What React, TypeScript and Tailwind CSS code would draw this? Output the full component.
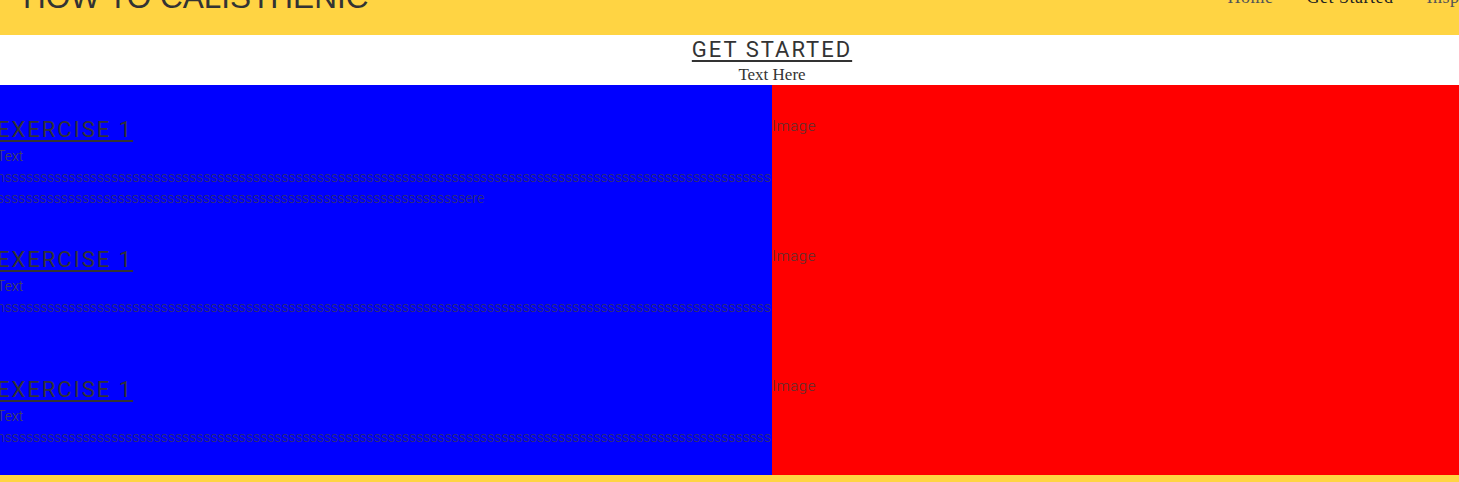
const slab = { fontFamily: '"Liberation Serif", "DejaVu Serif", serif' };
const roboto = { fontFamily: 'Roboto, "Liberation Sans", sans-serif' };

const exercises = [
  { title: "EXERCISE 1", body: "n" + "s".repeat(174) + "ere" },
  { title: "EXERCISE 1", body: "n" + "s".repeat(108) },
  { title: "EXERCISE 1", body: "n" + "s".repeat(108) },
];

function Header() {
  return (
    <header className="flex items-center justify-between bg-[#ffd443] py-5 pl-[23px] pr-[34px]">
      <h1
        className="text-[31.5px] leading-[36px] text-[#333333]"
        style={{ fontFamily: '"Liberation Sans", Arial, sans-serif' }}
      >
        HOW TO CALISTHENIC
      </h1>
      <nav
        className="flex shrink-0 gap-[33px] text-[18px] leading-6 tracking-[0.5px] text-[#555555]"
        style={slab}
      >
        <a>Home</a>
        <a className="text-[#222222]">Get Started</a>
        <a>Inspiration</a>
      </nav>
    </header>
  );
}

function ExerciseRow({ title, body }: { title: string; body: string }) {
  return (
    <div className="grid h-[130px] grid-cols-2">
      <div className="overflow-hidden bg-[#0000ff] pt-[30px]">
        <div className="-ml-[3px] w-[775px]" style={roboto}>
          <h2 className="text-[22px] leading-[29px] tracking-[2px] text-[#333333] underline underline-offset-[3px]">
            {title}
          </h2>
          <p className="mt-[2px] text-[14px] font-light leading-[21px] text-[#4a4a4a]">Text</p>
          <p className="break-all text-[14px] font-light leading-[21px] text-[#333366]">
            {body}
          </p>
        </div>
      </div>
      <div className="bg-[#ff0000] pt-[31px]">
        <p
          className="text-[15px] font-light leading-[21px] tracking-[0.5px] text-[#553333]"
          style={roboto}
        >
          Image
        </p>
      </div>
    </div>
  );
}

export default function App() {
  return (
    <div className="h-[482px] w-full overflow-hidden bg-[#ffd443]">
      <div className="-mt-[41px] w-[1544px]">
        <Header />
        <section className="flex h-[50px] flex-col items-center bg-white">
          <h2
            className="text-[22px] leading-[29px] tracking-[2px] text-[#333333] underline underline-offset-[3px]"
            style={roboto}
          >
            GET STARTED
          </h2>
          <p className="text-[17px] leading-[21px] text-[#333333]" style={slab}>
            Text Here
          </p>
        </section>
        <main>
          {exercises.map((ex, i) => (
            <ExerciseRow key={i} title={ex.title} body={ex.body} />
          ))}
        </main>
        <footer className="h-[40px] bg-[#ffd443]" />
      </div>
    </div>
  );
}
